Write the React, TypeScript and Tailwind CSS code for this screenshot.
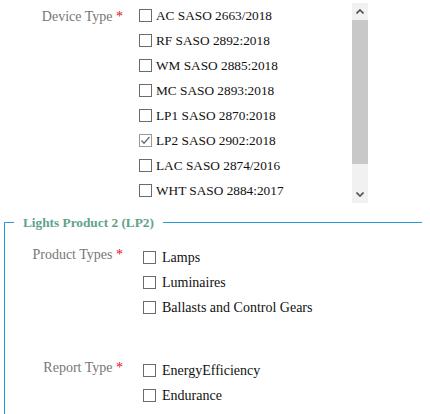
import React from 'react';

const deviceTypes = [
  { label: 'AC SASO 2663/2018', checked: false },
  { label: 'RF SASO 2892:2018', checked: false },
  { label: 'WM SASO 2885:2018', checked: false },
  { label: 'MC SASO 2893:2018', checked: false },
  { label: 'LP1 SASO 2870:2018', checked: false },
  { label: 'LP2 SASO 2902:2018', checked: true },
  { label: 'LAC SASO 2874/2016', checked: false },
  { label: 'WHT SASO 2884:2017', checked: false },
  { label: 'SWH SASO 2896:2018', checked: false },
];

const productTypes = ['Lamps', 'Luminaires', 'Ballasts and Control Gears'];
const reportTypes = ['EnergyEfficiency', 'Endurance'];

const Box: React.FC<{ checked?: boolean }> = ({ checked }) =>
  checked ? (
    <svg width="13" height="13" viewBox="0 0 13 13" className="shrink-0">
      <rect x="0.5" y="0.5" width="12" height="12" fill="#fff" stroke="#9a9a9a" />
      <path d="M2.5 6.5 L5 9.2 L10.5 3" fill="none" stroke="#6a6a6a" strokeWidth="1.3" />
    </svg>
  ) : (
    <span className="w-[13px] h-[13px] shrink-0 border border-[#6b6b6b] bg-white" />
  );

const Label: React.FC<{ text: string; className?: string }> = ({ text, className }) => (
  <div className={`text-right text-[14px] leading-[16px] text-[#777] ${className ?? ''}`}>
    {text} <span className="text-[#d11]">*</span>
  </div>
);

// classic scrollbar look, drawn since the headless page hides native ones
const Scrollbar = () => (
  <div className="w-[16px] h-[200px] bg-[#f1f1f1] flex flex-col items-center">
    <div className="h-[17px] flex items-center justify-center">
      <svg width="8" height="5" viewBox="0 0 8 5"><path d="M0.5 4.5 L4 1 L7.5 4.5" fill="none" stroke="#505050" strokeWidth="1.6" /></svg>
    </div>
    <div className="w-full h-[144px] bg-[#c8c8c8]" />
    <div className="flex-1" />
    <div className="h-[17px] flex items-center justify-center">
      <svg width="8" height="5" viewBox="0 0 8 5"><path d="M0.5 0.5 L4 4 L7.5 0.5" fill="none" stroke="#505050" strokeWidth="1.6" /></svg>
    </div>
  </div>
);

export default function App() {
  return (
    <div className="w-[430px] h-[414px] overflow-hidden bg-white" style={{ fontFamily: '"Liberation Serif", "Times New Roman", serif' }}>
      {/* device type */}
      <div className="flex pt-[3px]">
        <Label text="Device Type" className="w-[123px] pt-[6px]" />
        <div className="ml-[13px] w-[216px] h-[200px] overflow-hidden pl-[3px]">
          {deviceTypes.map(d => (
            <label key={d.label} className="flex items-center h-[25px] gap-[4px] text-[13.3px] text-[#111] whitespace-nowrap">
              <Box checked={d.checked} />
              {d.label}
            </label>
          ))}
        </div>
        <Scrollbar />
      </div>

      {/* Lights Product 2 group */}
      <div className="ml-1 mr-[8px] mt-[19px] border-t border-l border-[#279bd9] pb-4">
        <div className="-mt-[8px] ml-[9px] px-[9px] w-fit bg-white text-[13.3px] leading-[15px] font-bold text-[#5fa28b]">
          Lights Product 2 (LP2)
        </div>

        <div className="flex mt-[15px]">
          <Label text="Product Types" className="w-[118px] pt-[2px]" />
          <div className="ml-[20px] flex flex-col">
            {productTypes.map(p => (
              <label key={p} className="flex items-center h-[25px] gap-[6px] text-[14px] text-[#111]">
                <Box />
                {p}
              </label>
            ))}
          </div>
        </div>

        <div className="flex mt-[38px]">
          <Label text="Report Type" className="w-[118px] pt-[2px]" />
          <div className="ml-[20px] flex flex-col">
            {reportTypes.map(p => (
              <label key={p} className="flex items-center h-[25px] gap-[6px] text-[14px] text-[#111]">
                <Box />
                {p}
              </label>
            ))}
          </div>
        </div>
      </div>
    </div>
  );
}
